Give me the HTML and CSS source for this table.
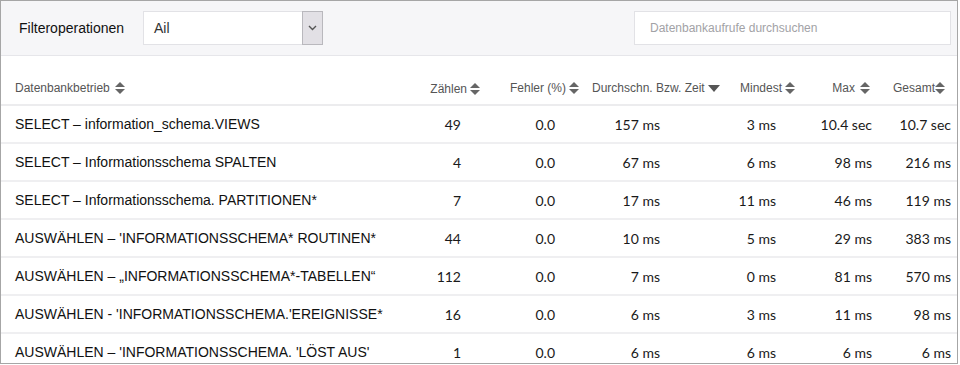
FILE: index.html
```html
<!DOCTYPE html>
<html lang="de">
<head>
  <meta charset="UTF-8" />
  <meta name="viewport" content="width=device-width, initial-scale=1.0"/>
  <title>Datenbankaufrufe</title>
  <link rel="stylesheet" href="styles.css">
</head>
<body>
  <div class="frame">
    <div class="toolbar">
      <span class="filter-label">Filteroperationen</span>
      <div class="select">
        <span class="select-value">Ail</span>
        <span class="select-btn">
          <svg width="9" height="6" viewBox="0 0 9 6"><path d="M1 1 L4.5 4.5 L8 1" fill="none" stroke="#555" stroke-width="1.4"/></svg>
        </span>
      </div>
      <div class="search">Datenbankaufrufe durchsuchen</div>
    </div>

    <div class="row head">
      <div class="cell c1">Datenbankbetrieb <span class="sort"></span></div>
      <div class="cell c2">Zählen<span class="sort"></span></div>
      <div class="cell c3">Fehler (%) <span class="sort"></span></div>
      <div class="cell c4">Durchschn. Bzw. Zeit <span class="sort-down"></span></div>
      <div class="cell c5">Mindest<span class="sort"></span></div>
      <div class="cell c6">Max <span class="sort"></span></div>
      <div class="cell c7">Gesamt<span class="sort"></span></div>
    </div>

    <div class="row">
      <div class="cell c1">SELECT – information_schema.VIEWS</div>
      <div class="cell num c2">49</div>
      <div class="cell num c3">0.0</div>
      <div class="cell num c4">157 ms</div>
      <div class="cell num c5">3 ms</div>
      <div class="cell num c6">10.4 sec</div>
      <div class="cell num c7">10.7 sec</div>
    </div>
    <div class="row">
      <div class="cell c1">SELECT – Informationsschema SPALTEN</div>
      <div class="cell num c2">4</div>
      <div class="cell num c3">0.0</div>
      <div class="cell num c4">67 ms</div>
      <div class="cell num c5">6 ms</div>
      <div class="cell num c6">98 ms</div>
      <div class="cell num c7">216 ms</div>
    </div>
    <div class="row">
      <div class="cell c1">SELECT – Informationsschema. PARTITIONEN*</div>
      <div class="cell num c2">7</div>
      <div class="cell num c3">0.0</div>
      <div class="cell num c4">17 ms</div>
      <div class="cell num c5">11 ms</div>
      <div class="cell num c6">46 ms</div>
      <div class="cell num c7">119 ms</div>
    </div>
    <div class="row">
      <div class="cell c1">AUSWÄHLEN – 'INFORMATIONSSCHEMA* ROUTINEN*</div>
      <div class="cell num c2">44</div>
      <div class="cell num c3">0.0</div>
      <div class="cell num c4">10 ms</div>
      <div class="cell num c5">5 ms</div>
      <div class="cell num c6">29 ms</div>
      <div class="cell num c7">383 ms</div>
    </div>
    <div class="row">
      <div class="cell c1">AUSWÄHLEN – „INFORMATIONSSCHEMA*-TABELLEN“</div>
      <div class="cell num c2">112</div>
      <div class="cell num c3">0.0</div>
      <div class="cell num c4">7 ms</div>
      <div class="cell num c5">0 ms</div>
      <div class="cell num c6">81 ms</div>
      <div class="cell num c7">570 ms</div>
    </div>
    <div class="row">
      <div class="cell c1">AUSWÄHLEN - 'INFORMATIONSSCHEMA.'EREIGNISSE*</div>
      <div class="cell num c2">16</div>
      <div class="cell num c3">0.0</div>
      <div class="cell num c4">6 ms</div>
      <div class="cell num c5">3 ms</div>
      <div class="cell num c6">11 ms</div>
      <div class="cell num c7">98 ms</div>
    </div>
    <div class="row">
      <div class="cell c1">AUSWÄHLEN – 'INFORMATIONSSCHEMA. 'LÖST AUS'</div>
      <div class="cell num c2">1</div>
      <div class="cell num c3">0.0</div>
      <div class="cell num c4">6 ms</div>
      <div class="cell num c5">6 ms</div>
      <div class="cell num c6">6 ms</div>
      <div class="cell num c7">6 ms</div>
    </div>
  </div>
</body>
</html>
```

FILE: styles.css
```css
body {
  margin: 0;
  padding: 0;
  background: #fff;
  font-family: "Liberation Sans", Arial, sans-serif;
  color: #111;
}

.frame {
  width: 956px;
  height: 362px;
  border: 1px solid #a6a6a6;
  overflow: hidden;
}

.toolbar {
  display: flex;
  align-items: center;
  height: 54px;
  background: #f6f6f8;
  border-bottom: 1px solid #e6e6ea;
  padding: 0 0 0 18px;
}

.filter-label {
  font-size: 14px;
  color: #111;
  width: 124px;
}

.select {
  display: flex;
  width: 180px;
  height: 34px;
  box-sizing: border-box;
  background: #fff;
  border: 1px solid #e2e2e6;
}

.select-value {
  flex: 1;
  font-size: 14px;
  color: #333;
  padding-left: 10px;
  line-height: 32px;
}

.select-btn {
  width: 19px;
  background: #e2e0e5;
  border: 1px solid #b9b8bd;
  margin: -1px -1px -1px 0;
  display: flex;
  align-items: center;
  justify-content: center;
}

.search {
  margin-left: 311px;
  width: 317px;
  height: 34px;
  box-sizing: border-box;
  background: #fff;
  border: 1px solid #e2e2e6;
  font-size: 12px;
  color: #a2a2a6;
  padding-left: 15px;
  line-height: 32px;
}

.row {
  display: grid;
  grid-template-columns: 419px 70px 95px 140px 80px 75px 77px;
  height: 36px;
  align-items: center;
  border-bottom: 2px solid #efeff1;
}

.row.head {
  height: 48px;
  align-items: end;
  border-bottom: 2px solid #ececee;
}

.cell {
  font-size: 14px;
  white-space: nowrap;
}

.c1 {
  padding-left: 14px;
}

.head .cell {
  font-size: 12px;
  color: #555;
  padding-bottom: 9px;
  display: flex;
  align-items: center;
}

.head .c2,
.head .c5,
.head .c6 {
  justify-content: flex-end;
  padding-right: 10px;
}

.head .c2 {
  padding-bottom: 8px;
}

.head .c3 {
  padding-left: 20px;
}

.head .c4 {
  padding-left: 7px;
}

.head .c7 {
  justify-content: flex-end;
  padding-right: 12px;
}

.sort {
  display: inline-block;
  position: relative;
  width: 10px;
  height: 12px;
  margin-left: 3px;
}

.head .c1 .sort,
.head .c6 .sort {
  margin-left: 5px;
}

.head .c7 .sort {
  margin-left: 0;
}

.sort::before,
.sort::after {
  content: "";
  position: absolute;
  left: 0;
  border-left: 5px solid transparent;
  border-right: 5px solid transparent;
}

.sort::before {
  top: 0;
  border-bottom: 5px solid #666;
}

.sort::after {
  bottom: 0;
  border-top: 5px solid #666;
}

.sort-down {
  display: inline-block;
  width: 0;
  height: 0;
  margin-left: 3px;
  border-left: 6px solid transparent;
  border-right: 6px solid transparent;
  border-top: 7px solid #555;
}

.num {
  font-family: Lato, "Liberation Sans", sans-serif;
  font-size: 14px;
  color: #1a1a1a;
  text-align: right;
}

.num.c2 { padding-right: 29px; }
.num.c3 { padding-right: 30px; }
.num.c4 { padding-right: 65px; }
.num.c5 { padding-right: 29px; }
.num.c6 { padding-right: 8px; }
.num.c7 { padding-right: 6px; }
```
